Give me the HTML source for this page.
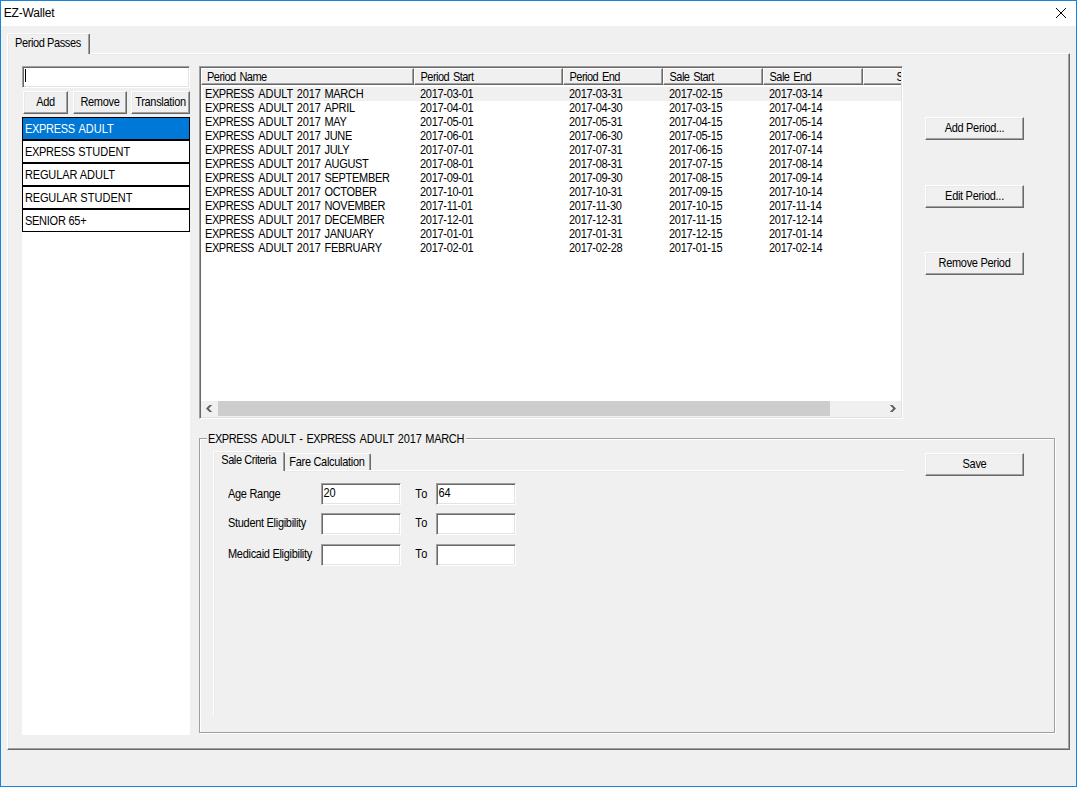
<!DOCTYPE html>
<html lang="en"><head><meta charset="utf-8"><title>EZ-Wallet</title>
<style>
html,body{margin:0;padding:0}
body{width:1077px;height:787px;overflow:hidden;background:#f0f0f0;position:relative;
 font-family:"Liberation Sans",sans-serif;font-size:11px;line-height:14px;color:#000;letter-spacing:-0.12px}
div,span{box-sizing:border-box}
.a{position:absolute}
.t{position:absolute;white-space:nowrap;height:14px;transform:scaleY(1.125);transform-origin:0 11px}
.btn{position:absolute;background:#f0f0f0;border:1px solid;border-color:#fff #696969 #696969 #fff;
 box-shadow:inset -1px -1px 0 #a0a0a0, inset 1px 1px 0 #e9e9e9;text-align:center;white-space:nowrap}
.btn span{position:absolute;left:0;right:0;height:14px;transform:scaleY(1.125);transform-origin:0 11px;letter-spacing:-0.3px}
.edit{position:absolute;background:#fff;border:1px solid;border-color:#a0a0a0 #fff #fff #a0a0a0;
 box-shadow:inset 1px 1px 0 #696969, inset -1px -1px 0 #e3e3e3}
.li{position:absolute;left:22px;width:168px;height:23px;border:1px solid #000;background:#fff}
.li i{font-style:normal}
.li span{letter-spacing:0.03px;position:absolute;left:1.9px;top:4px;white-space:nowrap;height:14px;transform:scaleY(1.125);transform-origin:0 11px}
.hd{position:absolute;top:0;height:17px;background:#f0f0f0;border:1px solid;border-color:#fff #696969 #696969 #fff;
 box-shadow:inset -1px -1px 0 #a0a0a0}
.hd span{position:absolute;top:1px;white-space:nowrap;height:14px;transform:scaleY(1.125);transform-origin:0 11px;letter-spacing:-0.52px;word-spacing:1.2px}
.row{position:absolute;left:0;width:700px;height:14px}
.row .d{letter-spacing:-0.29px}
.row i{font-style:normal;letter-spacing:-0.42px;margin-right:1.1px}
.row b{font-weight:normal;letter-spacing:-0.3px}
.row .n{word-spacing:0.9px}
.g i{font-style:normal;letter-spacing:-0.42px;margin-right:1.1px}
.g b{font-weight:normal;letter-spacing:-0.3px}
.row span{position:absolute;top:0;white-space:nowrap;height:14px;transform:scaleY(1.125);transform-origin:0 11px}
</style></head>
<body>
<div class="a" style="left:0;top:0;width:1077px;height:787px;border:1px solid #1883d7"></div>
<div class="a" style="left:1px;top:1px;width:1075px;height:25px;background:#fff"></div>
<div class="t" style="left:3.8px;top:6px;font-size:12px;letter-spacing:-0.18px;transform:none">EZ-Wallet</div>
<svg class="a" style="left:1055px;top:7px" width="12" height="12" viewBox="0 0 12 12"><path d="M1 1 L11 11 M11 1 L1 11" stroke="#000" stroke-width="1" fill="none"/></svg>
<div class="a" style="left:7px;top:53px;width:1063px;height:697px;border:1px solid;border-color:#fff #696969 #696969 #fff;box-shadow:inset -1px -1px 0 #a0a0a0, inset 1px 1px 0 #e9e9e9"></div>
<div class="a" style="left:7px;top:33px;width:83px;height:21px;background:#f0f0f0;border:1px solid;border-color:#fff #696969 transparent #fff;border-bottom:0;border-radius:2px 2px 0 0;box-shadow:inset -1px 0 0 #a0a0a0, inset 1px 1px 0 #e9e9e9"></div>
<div class="a" style="left:9px;top:54px;width:79px;height:1px;background:#f0f0f0"></div>
<div class="t" style="left:15px;top:36px;letter-spacing:-0.4px">Period Passes</div>
<div class="edit" style="left:22px;top:66px;width:168px;height:22px"></div>
<div class="a" style="left:25px;top:69px;width:1px;height:13px;background:#000"></div>
<div class="btn" style="left:23px;top:91px;width:45px;height:23px"><span style="top:3px;">Add</span></div>
<div class="btn" style="left:73px;top:91px;width:54px;height:23px"><span style="top:3px;letter-spacing:-0.3px;">Remove</span></div>
<div class="btn" style="left:131px;top:91px;width:59px;height:23px"><span style="top:3px;letter-spacing:-0.3px;">Translation</span></div>
<div class="a" style="left:22px;top:117px;width:168px;height:618px;background:#fff"></div>
<div class="li" style="top:117px;background:#0078d7;color:#fff;"><span><i style="letter-spacing:-0.3px;margin-right:1.2px">EXPRESS</i> ADULT</span></div>
<div class="li" style="top:140px;"><span><i style="letter-spacing:-0.3px;margin-right:0.3px">EXPRESS</i> STUDENT</span></div>
<div class="li" style="top:163px;"><span><i style="letter-spacing:-0.12px">REGULAR</i> ADULT</span></div>
<div class="li" style="top:186px;"><span><i style="letter-spacing:-0.12px">REGULAR</i> STUDENT</span></div>
<div class="li" style="top:209px;"><span><i style="letter-spacing:-0.24px">SENIOR 65+</i></span></div>
<div class="a" style="left:199px;top:66px;width:704px;height:353px;background:#fff;border:1px solid;border-color:#a0a0a0 #fff #fff #a0a0a0;box-shadow:inset 1px 1px 0 #696969, inset -1px -1px 0 #e3e3e3"></div>
<div class="a" style="left:201px;top:68px;width:700px;height:349px;overflow:hidden">
<div class="hd" style="left:0px;width:213px"><span style="left:5px">Period Name</span></div>
<div class="hd" style="left:213px;width:149px"><span style="left:5.5px">Period Start</span></div>
<div class="hd" style="left:362px;width:100px"><span style="left:5.5px">Period End</span></div>
<div class="hd" style="left:462px;width:100px"><span style="left:5.5px">Sale Start</span></div>
<div class="hd" style="left:562px;width:100px"><span style="left:5.5px">Sale End</span></div>
<div class="hd" style="left:662px;width:100px"><span style="left:32.4px">S</span></div>
<div class="row" style="top:19px;"><div class="a" style="left:2px;top:0;width:698px;height:14px;background:#f0f0f0"></div><span class="n" style="left:4px"><i>EXPRESS</i> ADULT 2017 <b>MARCH</b></span><span class="d" style="left:219px">2017-03-01</span><span class="d" style="left:368px">2017-03-31</span><span class="d" style="left:468px">2017-02-15</span><span class="d" style="left:568px">2017-03-14</span></div>
<div class="row" style="top:33px;"><span class="n" style="left:4px"><i>EXPRESS</i> ADULT 2017 <b>APRIL</b></span><span class="d" style="left:219px">2017-04-01</span><span class="d" style="left:368px">2017-04-30</span><span class="d" style="left:468px">2017-03-15</span><span class="d" style="left:568px">2017-04-14</span></div>
<div class="row" style="top:47px;"><span class="n" style="left:4px"><i>EXPRESS</i> ADULT 2017 <b>MAY</b></span><span class="d" style="left:219px">2017-05-01</span><span class="d" style="left:368px">2017-05-31</span><span class="d" style="left:468px">2017-04-15</span><span class="d" style="left:568px">2017-05-14</span></div>
<div class="row" style="top:61px;"><span class="n" style="left:4px"><i>EXPRESS</i> ADULT 2017 <b>JUNE</b></span><span class="d" style="left:219px">2017-06-01</span><span class="d" style="left:368px">2017-06-30</span><span class="d" style="left:468px">2017-05-15</span><span class="d" style="left:568px">2017-06-14</span></div>
<div class="row" style="top:75px;"><span class="n" style="left:4px"><i>EXPRESS</i> ADULT 2017 <b>JULY</b></span><span class="d" style="left:219px">2017-07-01</span><span class="d" style="left:368px">2017-07-31</span><span class="d" style="left:468px">2017-06-15</span><span class="d" style="left:568px">2017-07-14</span></div>
<div class="row" style="top:89px;"><span class="n" style="left:4px"><i>EXPRESS</i> ADULT 2017 <b>AUGUST</b></span><span class="d" style="left:219px">2017-08-01</span><span class="d" style="left:368px">2017-08-31</span><span class="d" style="left:468px">2017-07-15</span><span class="d" style="left:568px">2017-08-14</span></div>
<div class="row" style="top:103px;"><span class="n" style="left:4px"><i>EXPRESS</i> ADULT 2017 <b>SEPTEMBER</b></span><span class="d" style="left:219px">2017-09-01</span><span class="d" style="left:368px">2017-09-30</span><span class="d" style="left:468px">2017-08-15</span><span class="d" style="left:568px">2017-09-14</span></div>
<div class="row" style="top:117px;"><span class="n" style="left:4px"><i>EXPRESS</i> ADULT 2017 <b>OCTOBER</b></span><span class="d" style="left:219px">2017-10-01</span><span class="d" style="left:368px">2017-10-31</span><span class="d" style="left:468px">2017-09-15</span><span class="d" style="left:568px">2017-10-14</span></div>
<div class="row" style="top:131px;"><span class="n" style="left:4px"><i>EXPRESS</i> ADULT 2017 <b>NOVEMBER</b></span><span class="d" style="left:219px">2017-11-01</span><span class="d" style="left:368px">2017-11-30</span><span class="d" style="left:468px">2017-10-15</span><span class="d" style="left:568px">2017-11-14</span></div>
<div class="row" style="top:145px;"><span class="n" style="left:4px"><i>EXPRESS</i> ADULT 2017 <b>DECEMBER</b></span><span class="d" style="left:219px">2017-12-01</span><span class="d" style="left:368px">2017-12-31</span><span class="d" style="left:468px">2017-11-15</span><span class="d" style="left:568px">2017-12-14</span></div>
<div class="row" style="top:159px;"><span class="n" style="left:4px"><i>EXPRESS</i> ADULT 2017 <b>JANUARY</b></span><span class="d" style="left:219px">2017-01-01</span><span class="d" style="left:368px">2017-01-31</span><span class="d" style="left:468px">2017-12-15</span><span class="d" style="left:568px">2017-01-14</span></div>
<div class="row" style="top:173px;"><span class="n" style="left:4px"><i>EXPRESS</i> ADULT 2017 <b>FEBRUARY</b></span><span class="d" style="left:219px">2017-02-01</span><span class="d" style="left:368px">2017-02-28</span><span class="d" style="left:468px">2017-01-15</span><span class="d" style="left:568px">2017-02-14</span></div>
<div class="a" style="left:0;top:333px;width:700px;height:16px;background:#f0f0f0"></div>
<div class="a" style="left:17px;top:333px;width:612px;height:15px;background:#cdcdcd"></div>
<svg class="a" style="left:0;top:332px" width="17" height="17" viewBox="0 0 17 17"><polygon points="5,8.5 8.5,5 11.2,5 7.7,8.5 11.2,12 8.5,12" fill="#606060"/></svg>
<svg class="a" style="left:683px;top:332px" width="17" height="17" viewBox="0 0 17 17"><polygon points="12,8.5 8.5,5 5.8,5 9.3,8.5 5.8,12 8.5,12" fill="#606060"/></svg>
</div>
<div class="btn" style="left:925px;top:117px;width:99px;height:23px"><span style="top:3px;">Add Period...</span></div>
<div class="btn" style="left:925px;top:185px;width:99px;height:23px"><span style="top:3px;">Edit Period...</span></div>
<div class="btn" style="left:925px;top:252px;width:99px;height:23px"><span style="top:3px;">Remove Period</span></div>
<div class="a" style="left:200px;top:439px;width:856px;height:295px;border:1px solid #fff"></div>
<div class="a" style="left:199px;top:438px;width:856px;height:295px;border:1px solid #a0a0a0"></div>
<div class="t g" style="left:206.5px;top:432px;background:#f0f0f0;padding:0 2px 0 1.5px;word-spacing:0.7px"><i>EXPRESS</i> ADULT - <i>EXPRESS</i> ADULT 2017 <b>MARCH</b></div>
<div class="a" style="left:213px;top:470px;width:690px;height:246px;border-left:1px solid #fff;border-top:1px solid #fff;box-shadow:inset 1px 1px 0 #e9e9e9"></div>
<div class="a" style="left:213px;top:451px;width:70px;height:21px;background:#f0f0f0;border:1px solid;border-color:#fff transparent transparent #fff;border-bottom:0;border-right:0;border-radius:2px 0 0 0;box-shadow:inset 1px 1px 0 #e9e9e9"></div>
<div class="a" style="left:283px;top:452px;width:2px;height:19px;border-left:1px solid #a0a0a0;border-right:1px solid #696969;border-radius:0 2px 0 0"></div>
<div class="a" style="left:283px;top:471px;width:2px;height:1px;background:#f0f0f0"></div>
<div class="a" style="left:285px;top:453px;width:86px;height:17px;background:#f0f0f0;border:1px solid;border-color:#fff #696969 transparent #f0f0f0;border-bottom:0;border-radius:0 2px 0 0;box-shadow:inset -1px 0 0 #a0a0a0"></div>
<div class="t" style="left:221.3px;top:453px;letter-spacing:-0.44px">Sale Criteria</div>
<div class="t" style="left:289.3px;top:455px;letter-spacing:-0.3px">Fare Calculation</div>
<div class="t" style="left:228px;top:487px;letter-spacing:-0.3px">Age Range</div>
<div class="edit" style="left:321px;top:483px;width:80px;height:22px"></div>
<div class="t" style="left:415.2px;top:487px;letter-spacing:0.5px">To</div>
<div class="edit" style="left:436px;top:483px;width:80px;height:22px"></div>
<div class="t" style="left:228px;top:516px;letter-spacing:-0.3px">Student Eligibility</div>
<div class="edit" style="left:321px;top:513px;width:80px;height:22px"></div>
<div class="t" style="left:415.2px;top:516px;letter-spacing:0.5px">To</div>
<div class="edit" style="left:436px;top:513px;width:80px;height:22px"></div>
<div class="t" style="left:228px;top:547px;letter-spacing:-0.3px">Medicaid Eligibility</div>
<div class="edit" style="left:321px;top:544px;width:80px;height:22px"></div>
<div class="t" style="left:415.2px;top:547px;letter-spacing:0.5px">To</div>
<div class="edit" style="left:436px;top:544px;width:80px;height:22px"></div>
<div class="t" style="left:323.5px;top:486px">20</div>
<div class="t" style="left:438.5px;top:486px">64</div>
<div class="btn" style="left:925px;top:453px;width:99px;height:23px"><span style="top:3px;">Save</span></div>
</body></html>
